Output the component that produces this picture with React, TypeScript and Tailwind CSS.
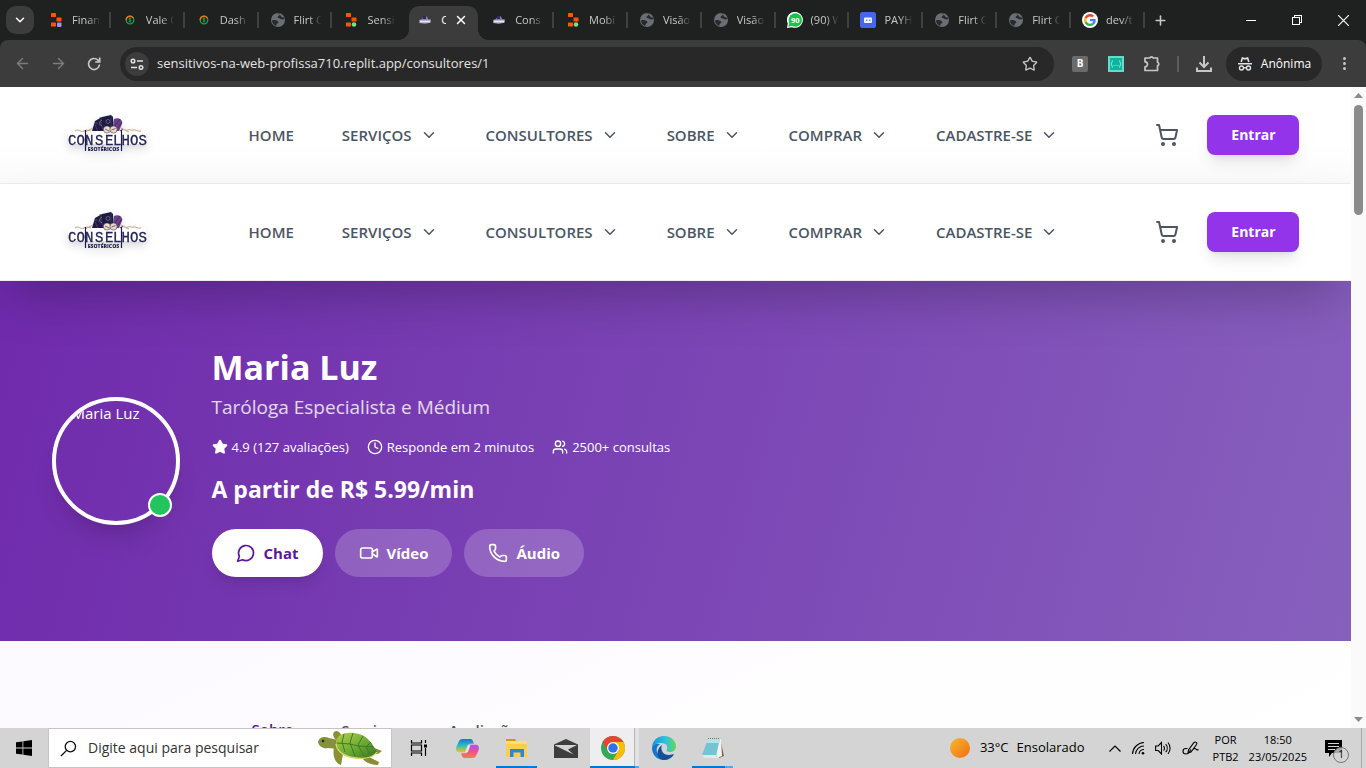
import React from "react";
import { ChevronDown, ShoppingCart, Star, Clock, Users, Video, Phone, ArrowLeft, ArrowRight, Plus, X } from "lucide-react";

type Fav = "finance" | "replit" | "coin" | "globe" | "brand" | "whats" | "pay" | "google";

function GoogleG() {
  return (
    <svg viewBox="0 0 48 48" className="size-4 shrink-0" aria-hidden="true">
      <circle cx="24" cy="24" r="24" fill="#fff" />
      <g transform="translate(6 6) scale(.75)">
        <path fill="#EA4335" d="M24 9.500c3.500 0 6.700 1.200 9.200 3.600l6.900-6.900C35.900 2.400 30.500 0 24 0 14.600 0 6.500 5.400 2.600 13.200l8 6.200C12.400 13.700 17.700 9.500 24 9.500z" />
        <path fill="#4285F4" d="M47 24.600c0-1.600-.2-3.100-.4-4.600H24v9h12.900c-.6 3-2.200 5.500-4.700 7.200l7.700 6C44.400 38 47 31.800 47 24.600z" />
        <path fill="#FBBC05" d="M10.500 28.600c-.5-1.500-.8-3-.8-4.600s.3-3.100.8-4.600l-8-6.200C.9 16.500 0 20.100 0 24s.9 7.500 2.600 10.800l7.900-6.200z" />
        <path fill="#34A853" d="M24 48c6.500 0 11.900-2.100 15.900-5.800l-7.700-6c-2.200 1.500-4.900 2.300-8.200 2.300-6.300 0-11.600-4.200-13.500-9.900l-8 6.200C6.500 42.600 14.600 48 24 48z" />
      </g>
    </svg>
  );
}

function Favicon({ kind }: { kind: Fav }) {
  if (kind === "google") return <GoogleG />;
  return (
    <svg viewBox="0 0 16 16" className="size-4 shrink-0" aria-hidden="true">
      {(kind === "finance" || kind === "replit") && (
        <>
          <rect x="3" y="1" width="5" height="4" rx=".6" fill="#fd5402" />
          <rect x="8.500" y="5.500" width="5" height="4" rx=".6" fill="#fd5402" />
          <rect x="3" y="10.500" width="5" height="4" rx=".6" fill="#fd5402" />
          {kind === "finance" ? <rect x="9" y="10.500" width="4.500" height="4.500" rx="1" fill="#a78bfa" /> : <circle cx="11" cy="12.500" r="2.300" fill="#6ee787" />}
        </>
      )}
      {kind === "coin" && (
        <>
          <circle cx="8" cy="8" r="3.800" fill="none" stroke="#16a34a" strokeWidth="1.300" />
          <path d="M4.200 8a3.800 3.800 0 0 1 7.200-1.700" fill="none" stroke="#f97316" strokeWidth="1.300" />
          <path d="M9.300 6.600c-2.500-1-3.300.9-1.300 1.400s1.300 2.300-1.300 1.400M8 5.500v5" fill="none" stroke="#22a34a" strokeWidth=".9" />
        </>
      )}
      {kind === "globe" && (
        <>
          <circle cx="8" cy="8" r="7" fill="#6b6f75" />
          <path d="M2 8.500c2-.8 4-.5 5.500.5s1 2.500-.5 2.500L6 14c-2.500-1-4-3-4-5.500zM6.500 2l3.500-.4c-.3 1.500-.8 2.400-2 2.700l-.5 1.500 2.500.7c1 1 2.300 1.200 4.300.6V5.500l-2.500-.3L10.500 3.500 9.500 2z" fill="#282a2c" />
        </>
      )}
      {kind === "brand" && (
        <>
          <path d="M2 8l3-1 2-3 3 .5L11 7l3 .5v3L8 12l-6-1z" fill="#8884a8" />
          <path d="M3 8.500h10v2H3z" fill="#e5e7f2" />
          <path d="M6 4h3v3H6z" fill="#2c2a64" />
        </>
      )}
      {kind === "whats" && (
        <>
          <path d="M0 16l.8-4.500A8 8 0 1 1 5 15.300z" fill="#fff" />
          <circle cx="8.300" cy="8" r="6.700" fill="#16c44b" />
          <path d="M1.300 14.800l1-4 3 3z" fill="#16c44b" />
          <text x="8.300" y="10.600" fontSize="7.500" fontWeight="700" textAnchor="middle" fill="#fff" fontFamily="Open Sans, sans-serif">90</text>
        </>
      )}
      {kind === "pay" && (
        <>
          <rect width="16" height="16" rx="2.500" fill="#4666ee" />
          <rect x="4" y="5.500" width="8" height="5.500" rx="1" fill="#f3f5ff" />
          <path d="M6 7.500h1.500v1.500H6zM9 7.500h1.500v1.500H9z" fill="#6d84ef" />
        </>
      )}
    </svg>
  );
}

const browserTabs: { label: string; icon: Fav; active?: boolean; plain?: boolean }[] = [
  { label: "Finan", icon: "finance" },
  { label: "Vale C", icon: "coin" },
  { label: "Dash", icon: "coin" },
  { label: "Flirt C", icon: "globe" },
  { label: "Sensi", icon: "replit", plain: true },
  { label: "C", icon: "brand", active: true, plain: true },
  { label: "Cons", icon: "brand" },
  { label: "Mobi", icon: "replit" },
  { label: "Visão", icon: "globe" },
  { label: "Visão", icon: "globe" },
  { label: "(90) W", icon: "whats" },
  { label: "PAYH", icon: "pay" },
  { label: "Flirt C", icon: "globe" },
  { label: "Flirt C", icon: "globe" },
  { label: "dev/t", icon: "google" },
];

function TabStrip() {
  return (
    <div className="flex h-10 shrink-0 items-stretch bg-[#1f2120] text-[#c7c7c7]">
      <div className="flex w-[37px] shrink-0 items-center pl-1.5">
        <button aria-label="Pesquisar guias" className="flex size-7 items-center justify-center rounded-[10px] bg-[#3c3c3c] text-white">
          <ChevronDown size={14} strokeWidth={2.5} />
        </button>
      </div>
      <div className="flex min-w-0 max-w-[1108px] flex-1 items-stretch">
        {browserTabs.map((t, i) => (
          <div key={i} className="flex min-w-0 flex-1 items-stretch">
            {t.active ? (
              <div className="relative mt-1.5 ml-[3px] flex w-[69px] items-center rounded-t-[10px] bg-[#3c3c3c] pb-1.5 pl-2 before:absolute before:bottom-0 before:-left-2.5 before:size-2.5 before:bg-[radial-gradient(circle_at_0_0,transparent_9.5px,#3c3c3c_10px)] after:absolute after:-right-2.5 after:bottom-0 after:size-2.5 after:bg-[radial-gradient(circle_at_100%_0,transparent_9.5px,#3c3c3c_10px)]">
                <Favicon kind={t.icon} />
                <span className="ml-2 w-[5px] overflow-hidden text-[11px] whitespace-nowrap text-white">{t.label}</span>
                <button aria-label="Fechar guia" className="ml-2 text-white">
                  <X size={14} strokeWidth={2.5} />
                </button>
              </div>
            ) : (
              <>
                <div className="flex min-w-0 flex-1 items-center pl-[11px]">
                  <Favicon kind={t.icon} />
                  <span className="mr-1.5 ml-2 min-w-0 flex-1 overflow-hidden [mask-image:linear-gradient(to_right,#000_50%,transparent_92%)] text-[11px] whitespace-nowrap">{t.label}</span>
                </div>
                <span className={t.plain ? "w-0.5" : "h-4 w-0.5 self-center bg-[#3f4140]"} />
              </>
            )}
          </div>
        ))}
      </div>
      <button aria-label="Nova guia" className="flex w-[30px] shrink-0 items-center justify-center">
        <Plus size={15} strokeWidth={2.5} />
      </button>
      <div className="ml-auto flex items-stretch text-white">
        <button aria-label="Minimizar" className="flex w-[46px] items-center justify-center">
          <span className="h-px w-2.5 bg-white" />
        </button>
        <button aria-label="Restaurar" className="flex w-[46px] items-center justify-center">
          <svg viewBox="0 0 10 10" className="size-2.5" fill="none" stroke="currentColor" shapeRendering="crispEdges" aria-hidden="true">
            <path d="M.5 2.500h7v7h-7zM2.500 2.500v-2h7v7h-2" />
          </svg>
        </button>
        <button aria-label="Fechar" className="flex w-[46px] items-center justify-center">
          <svg viewBox="0 0 10 10" className="size-[11px]" stroke="currentColor" aria-hidden="true">
            <path d="M0 0l10 10M10 0L0 10" />
          </svg>
        </button>
      </div>
    </div>
  );
}

function Toolbar() {
  return (
    <div className="shrink-0 bg-[#1f2120]">
      <div className="flex h-[47px] items-center rounded-t-lg bg-[#3c3c3c] text-[#c7c7c7]">
        <div className="flex w-[120px] shrink-0 items-center pl-1">
          <button aria-label="Voltar" className="flex w-9 justify-center text-[#7c7c7c]"><ArrowLeft size={17} /></button>
          <button aria-label="Avançar" className="flex w-9 justify-center text-[#7c7c7c]"><ArrowRight size={17} /></button>
          <button aria-label="Recarregar" className="flex w-9 justify-center">
            <svg viewBox="0 0 16 16" className="size-4" fill="none" stroke="currentColor" strokeWidth="1.700" aria-hidden="true">
              <path d="M13.500 8.500A5.500 5.500 0 1 1 12 4.200l1.500 1.500M13.700 1.500v4.500H9.200" />
            </svg>
          </button>
        </div>
        <div className="flex h-[34px] min-w-0 flex-1 items-center rounded-full bg-[#282828] pr-4 pl-[5px]">
          <span className="flex size-6 items-center justify-center rounded-full bg-[#3c3c3c]">
            <svg viewBox="0 0 14 12" className="h-3 w-3.5" fill="none" stroke="#e3e3e3" strokeWidth="1.500" aria-hidden="true">
              <circle cx="3" cy="3" r="1.800" /><path d="M7 3h6M1 9.500h6" /><circle cx="11" cy="9.500" r="1.800" />
            </svg>
          </span>
          <input aria-label="Endereço" readOnly value="sensitivos-na-web-profissa710.replit.app/consultores/1" className="ml-2 min-w-0 flex-1 bg-transparent text-[13px] text-[#e3e3e3] outline-none" />
          <button aria-label="Favoritar"><Star size={16} strokeWidth={2} /></button>
        </div>
        <div className="flex shrink-0 items-center">
          <span className="ml-[18px] flex size-4 items-center justify-center rounded-xs bg-[#6b6b6b] text-[10px] font-bold text-white">B</span>
          <svg viewBox="0 0 16 16" className="ml-5 size-4" aria-hidden="true">
            <path d="M0 0h16v16H0z" fill="#62dccb" />
            <path d="M2 2h12v12H2z" fill="#10b3a0" />
            <path d="M5 4.500c-1.500 0-.5 2.500-2 3.500 1.500 1 .5 3.500 2 3.500M11 4.500c1.500 0 .5 2.500 2 3.500-1.500 1-.5 3.500-2 3.500M5.500 9.500h1M7.500 9.500h1M9.500 9.500h1" fill="none" stroke="#8ff0e4" strokeWidth=".9" />
          </svg>
          <button aria-label="Extensões" className="ml-5">
            <svg viewBox="0 0 17 17" className="size-[17px]" fill="none" stroke="currentColor" strokeWidth="1.700" strokeLinejoin="round" aria-hidden="true">
              <path d="M1 3h4.700a2 1.900 0 0 1 3.600 0H13.500v4.200a1.900 1.900 0 0 1 0 3.600V15.500H1v-3.700a2.500 2.500 0 0 0 0-5z" />
            </svg>
          </button>
          <span className="ml-4 h-4 w-0.5 bg-[#5c5c5c]" />
          <button aria-label="Downloads" className="ml-4">
            <svg viewBox="0 0 18 18" className="size-[18px]" fill="none" stroke="currentColor" strokeWidth="2" aria-hidden="true">
              <path d="M9 1v11M4.500 7.500L9 12l4.500-4.500M2 12.500V16h14v-3.500" />
            </svg>
          </button>
          <button className="ml-[13px] flex h-[34px] w-24 items-center justify-center gap-2 rounded-full bg-[#282828] text-xs text-white">
            <svg viewBox="0 0 16 16" className="size-4" aria-hidden="true">
              <path d="M4.200 6l1.200-4 2.600.8 2.600-.8L11.800 6M1 7.700h14" fill="none" stroke="#e3e3e3" strokeWidth="1.600" />
              <circle cx="4.500" cy="12" r="2" fill="none" stroke="#e3e3e3" strokeWidth="1.400" />
              <circle cx="11.500" cy="12" r="2" fill="none" stroke="#e3e3e3" strokeWidth="1.400" />
              <path d="M6.500 11.800h3" stroke="#e3e3e3" strokeWidth="1.400" />
            </svg>
            Anônima
          </button>
          <button aria-label="Menu" className="flex w-11 flex-col items-center gap-0.5">
            <span className="size-[3px] rounded-full bg-[#c7c7c7]" />
            <span className="size-[3px] rounded-full bg-[#c7c7c7]" />
            <span className="size-[3px] rounded-full bg-[#c7c7c7]" />
          </button>
        </div>
      </div>
    </div>
  );
}

function BrandLogo() {
  return (
    <svg viewBox="1 2 80 40" className="h-10 w-20 drop-shadow-lg" role="img" aria-label="Conselhos Esotéricos">
      <path d="M1 18h78v13H1z" fill="#fff" />
      <path d="M25 18l3-10 7-4 9-2 2 2 1 14z" fill="#1a1b4b" />
      <path d="M33 4l3 13M28 9l6 4M44 3v12" stroke="#3b3561" strokeWidth=".8" />
      <path d="M35 7c-3 1-3 5 0 6" fill="none" stroke="#9a6a4c" />
      <circle cx="41" cy="8.500" r="2" fill="none" stroke="#7c6353" strokeWidth=".9" />
      <path d="M47 6c4-2 9 0 8 5l-3 7h-6z" fill="#6d3f88" />
      <path d="M48 13l5-7M51 15l4-6" stroke="#3a2760" strokeWidth=".8" />
      <path d="M31 18c-3-5-3-7-1-9M56 16l-3 2" stroke="#682f60" fill="none" />
      <circle cx="40" cy="16.500" r="3.600" fill="#f0dfcf" stroke="#4a3a4d" strokeWidth=".6" />
      <circle cx="46.500" cy="16.500" r="3.600" fill="#ead6c6" stroke="#4a3a4d" strokeWidth=".6" />
      <path d="M38 16l4 2M44.500 17l4-1.500" stroke="#38315a" strokeWidth=".7" />
      <path d="M8 18c4-3 5 2 9 0s5 0 7 0M18 19l8-4M59 18c4-3 5 0 7-1s5 2 8 1M54 15l8 4" fill="none" stroke="#bfa27f" strokeWidth="1" />
      <path d="M18.500 17v21M54.500 17v21" stroke="#1a1b4b" strokeWidth="1.200" />
      <text y="32" x="1 9.500 18 28 38 46 54.500 63 71.500" fontFamily="Liberation Mono, monospace" fontSize="14" fill="#23235a" stroke="#23235a" strokeWidth=".3">CONSELHOS</text>
      <text x="36.500" y="37.500" textAnchor="middle" fontFamily="Open Sans, sans-serif" fontSize="5.200" fontWeight="800" fill="#1a1b4b">ESOTÉRICOS</text>
    </svg>
  );
}

const navItems = [
  { label: "HOME", menu: false },
  { label: "SERVIÇOS", menu: true },
  { label: "CONSULTORES", menu: true },
  { label: "SOBRE", menu: true },
  { label: "COMPRAR", menu: true },
  { label: "CADASTRE-SE", menu: true },
];

function SiteHeader({ shaded }: { shaded?: boolean }) {
  return (
    <header className={shaded ? "relative border-b border-[#ededee] bg-linear-to-b from-white from-60% to-[#fafafa]" : "relative z-10 border-b border-[#ededee] bg-white shadow-2xl"}>
      <div className="mx-auto flex h-24 max-w-[1280px] items-center justify-between px-4">
        <a href="#inicio" className="flex w-28 pl-4"><BrandLogo /></a>
        <nav className="flex items-center gap-12 text-[15px] font-semibold text-[#4b5563]">
          {navItems.map((n) =>
            n.menu ? (
              <button key={n.label} className="flex items-center gap-2">
                {n.label}
                <ChevronDown size={18} strokeWidth={2} />
              </button>
            ) : (
              <a key={n.label} href="#home">{n.label}</a>
            ),
          )}
        </nav>
        <div className="flex items-center gap-4">
          <button aria-label="Carrinho" className="px-3 text-[#4b5563]"><ShoppingCart size={24} /></button>
          <button className="h-10 w-[92px] rounded-lg bg-[#9333ea] text-sm font-bold text-white shadow-lg">Entrar</button>
        </div>
      </div>
    </header>
  );
}

function Hero() {
  return (
    <section className="bg-[linear-gradient(105deg,#6f2aac,#8760bd)] py-16 text-white">
      <div className="mx-auto flex max-w-[1280px] items-center gap-8 px-4">
        <div className="relative shrink-0">
          <div className="size-32 overflow-hidden rounded-full border-4 border-white pl-4 text-[15px] leading-6 shadow-xl">Maria Luz</div>
          <span className="absolute right-2 bottom-2 size-6 rounded-full border-2 border-white bg-[#22c55e]" />
        </div>
        <div>
          <h1 className="mb-1 text-[34px] leading-11 font-bold">Maria Luz</h1>
          <p className="mb-4 text-[19px] leading-7 text-white/80">Taróloga Especialista e Médium</p>
          <ul className="mb-4 flex gap-[18px] text-[13px] leading-5">
            <li className="flex items-center gap-1"><Star size={16} fill="currentColor" />4.9 (127 avaliações)</li>
            <li className="flex items-center gap-1"><Clock size={16} />Responde em 2 minutos</li>
            <li className="flex items-center gap-1"><Users size={16} />2500+ consultas</li>
          </ul>
          <p className="mb-6 text-[23px] leading-8 font-bold">A partir de R$ 5.99/min</p>
          <div className="flex gap-3 text-[15px] font-bold">
            <button className="flex h-12 items-center gap-2 rounded-full bg-white px-6 text-[#5b16a0] shadow-lg">
              <svg viewBox="0 0 24 24" className="size-5" fill="none" stroke="currentColor" strokeWidth="2" strokeLinecap="round" strokeLinejoin="round" aria-hidden="true">
                <path d="M7.900 20A9 9 0 1 0 4 16.100L2 22Z" />
              </svg>
              Chat
            </button>
            <button className="flex h-12 items-center gap-2 rounded-full bg-white/20 px-6"><Video size={20} />Vídeo</button>
            <button className="flex h-12 items-center gap-2 rounded-full bg-white/20 px-6"><Phone size={20} />Áudio</button>
          </div>
        </div>
      </div>
    </section>
  );
}

function Details() {
  return (
    <section className="pt-16">
      <div className="mx-auto flex max-w-[896px] text-[15px] leading-6 font-semibold text-[#4b5563]">
        <button className="border-b-2 border-[#5b16a0] px-6 py-3 text-[#5b16a0]">Sobre</button>
        <button className="px-6 py-3">Serviços</button>
        <button className="px-6 py-3">Avaliações</button>
      </div>
    </section>
  );
}

function ScrollRail() {
  return (
    <div className="flex w-[15px] shrink-0 flex-col items-center justify-between bg-[#fafafa] py-1.5" aria-hidden="true">
      <div className="flex flex-col items-center gap-[7px]">
        <svg viewBox="0 0 9 5" className="h-[5px] w-[9px]"><path d="M0 5l4.500-5L9 5z" fill="#8b8b8b" /></svg>
        <span className="h-[110px] w-[9px] rounded-full bg-[#8b8b8b]" />
      </div>
      <svg viewBox="0 0 9 5" className="h-[5px] w-[9px]"><path d="M0 0l4.500 5L9 0z" fill="#8b8b8b" /></svg>
    </div>
  );
}

function Turtle() {
  return (
    <svg viewBox="0 0 66 36" className="h-9 w-[66px] shrink-0" aria-hidden="true">
      <defs>
        <linearGradient id="shell" x1="0" y1="0" x2="1" y2="1">
          <stop offset="0" stopColor="#b5cf4a" /><stop offset=".5" stopColor="#6fae35" /><stop offset="1" stopColor="#36701f" />
        </linearGradient>
      </defs>
      <path d="M17 2c4-3 7 2 8 5l-6 3c-2-2-4-5-2-8zM18 17c4 0 8 3 8 7l-2 11c-5-1-9-8-7-18z" fill="#8a8f33" />
      <path d="M50 26l12 6-1 3c-6 0-12-2-15-6zM55 17l10 4-4 3-8-1z" fill="#8c8b36" />
      <path d="M1 12c1-5 6-6 11-4l9 2v9l-10-1c-4 1-9-1-10-6z" fill="#85903a" />
      <circle cx="6" cy="11" r="1.300" fill="#1e2610" />
      <path d="M19 12C20 3 31 1 42 4c10 3 14 11 18 18-5 8-20 8-30 4-7-3-12-7-11-14z" fill="url(#shell)" />
      <path d="M19 14c1 8 9 13 20 14 9 1 17 0 21-6" fill="none" stroke="#d6d96b" strokeWidth="1.300" />
      <path d="M27 4l-2 8 3 10M36 3l-3 10 5 13M46 6l-5 9 6 11M54 12l-5 5 4 7M20 13l13 1 8 2 15 1" fill="none" stroke="#3f7a25" strokeWidth="1" />
    </svg>
  );
}

function Slot({ label, bar, active, stacked, children }: { label: string; bar?: boolean; active?: boolean; stacked?: boolean; children: React.ReactNode }) {
  return (
    <button aria-label={label} className={active ? "relative flex w-[49px] items-center justify-center border-r-4 border-[#e2e2e2] bg-[#eeeeee]" : "relative flex w-[49px] items-center justify-center"}>
      {children}
      {active && <span className="absolute inset-y-0 right-0 w-px bg-[#b5b5b5]" />}
      {bar && (
        <span className={active ? "absolute inset-x-0 -right-1 bottom-0 flex h-0.5 bg-[#0078d7]" : "absolute inset-x-1 bottom-0 flex h-0.5 bg-[#0078d7]"}>
          {stacked && <span className={active ? "ml-auto w-1 bg-[#5ea5e0]" : "ml-auto w-2 bg-[#5ea5e0]"} />}
        </span>
      )}
    </button>
  );
}

function Taskbar() {
  return (
    <footer className="flex h-10 shrink-0 items-stretch bg-[#d4d4d4] text-black">
      <button aria-label="Iniciar" className="flex w-12 items-center justify-center">
        <svg viewBox="0 0 16 16" className="size-4" aria-hidden="true">
          <path d="M0 2.300L6.500 1.400v6.200H0zM7.300 1.300L16 0v7.600H7.300zM0 8.400h6.500v6.200L0 13.700zM7.300 8.400H16V16l-8.700-1.300z" />
        </svg>
      </button>
      <label className="mr-0.5 flex w-[344px] items-center border border-[#c4c4c4] bg-white pr-2 pl-[11px]">
        <svg viewBox="0 0 18 18" className="size-[17px] shrink-0" fill="none" stroke="#111" strokeWidth="1.400" aria-hidden="true">
          <circle cx="11" cy="7" r="5.500" /><path d="M7 11l-6 6" />
        </svg>
        <input aria-label="Pesquisar" placeholder="Digite aqui para pesquisar" className="ml-[11px] min-w-0 flex-1 bg-transparent text-sm outline-none placeholder:text-[#333]" />
        <Turtle />
      </label>
      <Slot label="Visão de tarefas">
        <svg viewBox="0 0 18 16" className="h-4 w-[18px]" fill="none" stroke="#000" strokeWidth="1.200" aria-hidden="true">
          <path d="M1.500 0v3h10V0M1.500 16v-3h10v3M1.500 5h10v6h-10zM15.500 0v3M15.500 8v8" /><path d="M14 4.500h3v3h-3z" fill="#000" stroke="none" />
        </svg>
      </Slot>
      <Slot label="Copilot">
        <svg viewBox="0 0 24 22" className="h-[21px] w-[23px]" aria-hidden="true">
          <defs>
            <linearGradient id="cpa" x1="0" y1="0" x2="0" y2="1"><stop offset="0" stopColor="#1c6fe0" /><stop offset=".5" stopColor="#2dbfb9" /><stop offset="1" stopColor="#f3c51d" /></linearGradient>
            <linearGradient id="cpb" x1="0" y1="0" x2="0" y2="1"><stop offset="0" stopColor="#a855f7" /><stop offset=".5" stopColor="#ee4f93" /><stop offset="1" stopColor="#f9813a" /></linearGradient>
          </defs>
          <path d="M7 1h8c2 0 2.500 1.500 3 3l.6 2H15c-2 0-2.600 1-3 2.500L10 15H3c-3 0-3.500-3-2.500-6L3 3.500C3.800 1.700 5 1 7 1z" fill="url(#cpa)" />
          <path d="M17 21H9c-2 0-2.500-1.500-3-3l-.6-2H9c2 0 2.600-1 3-2.500L14 7h7c3 0 3.500 3 2.500 6L21 18.500c-.8 1.800-2 2.500-4 2.500z" fill="url(#cpb)" />
          <path d="M12.500 7.500h2.500l-2.700 7.500H9.500z" fill="#e9e4ee" />
        </svg>
      </Slot>
      <Slot label="Explorador de Arquivos" bar>
        <svg viewBox="0 0 22 18" className="h-[18px] w-[22px]" aria-hidden="true">
          <path d="M0 0h9l1.500 2.500H0z" fill="#d9970f" /><path d="M0 2h21v16H0z" fill="#ffcf4b" /><path d="M0 2h21v3H0z" fill="#ffdc7a" /><path d="M4 18V10h14v8h-3.500v-4.500h-7V18z" fill="#2f87d3" />
        </svg>
      </Slot>
      <Slot label="Email">
        <svg viewBox="0 0 24 19" className="h-[19px] w-6" aria-hidden="true">
          <path d="M0 5.500L12 0l12 5.500V19H0z" fill="#3d3d3d" /><path d="M1 6h22l-9 4.500 5.500 5L1 6.500z" fill="#d4d4d4" />
        </svg>
      </Slot>
      <Slot label="Chrome" bar active stacked>
        <svg viewBox="0 0 48 48" className="size-6" aria-hidden="true">
          <circle cx="24" cy="24" r="24" fill="#34a853" />
          <path d="M3.200 12A24 24 0 0 1 44.800 12H24L13.600 30z" fill="#ea4335" />
          <path d="M44.800 12A24 24 0 0 1 24 48l10.400-18L24 12z" fill="#fbbc05" />
          <circle cx="24" cy="24" r="12" fill="#fff" /><circle cx="24" cy="24" r="9.500" fill="#2f72e8" />
        </svg>
      </Slot>
      <Slot label="Edge">
        <svg viewBox="0 0 24 24" className="size-6" aria-hidden="true">
          <defs>
            <linearGradient id="edgea" x1="0" y1="0" x2="1" y2="0"><stop offset="0" stopColor="#1b8fd8" /><stop offset=".55" stopColor="#2bc2df" /><stop offset="1" stopColor="#62d956" /></linearGradient>
          </defs>
          <path d="M0 12C0 5 5 0 12 0s12 5 12 10c0 4-3 6-6 6s-4-1-3-3 0-6-6-6c-4 0-8 2-9 5z" fill="url(#edgea)" />
          <path d="M0 12c1-3 4-5 8-4-3 2-4 5-3 8 2 5 6 6 10 7-8 3-15-3-15-11z" fill="#1476ce" />
          <path d="M10 9c-2 5 1 10 7 10 2 0 4-1 5-1-2 4-6 6-10 6-7 0-9-10-2-15z" fill="#10509c" />
        </svg>
      </Slot>
      <Slot label="Bloco de Notas" bar stacked>
        <svg viewBox="0 0 24 22" className="h-[22px] w-6" aria-hidden="true">
          <path d="M19 1l4 18-5 2z" fill="#7a6a4c" /><path d="M17 2h3l1 17-5 2z" fill="#f4f4ee" /><path d="M7 2h12l-4 16H1z" fill="#74c4d4" /><path d="M7 2h12l-1.200 4H5z" fill="#b7e3e8" /><path d="M1 18h14l1 3H3z" fill="#dfe9e9" /><path d="M7 1.500h12" stroke="#66777b" strokeWidth="1.200" strokeDasharray="1 1" />
        </svg>
      </Slot>
      <div className="ml-auto flex items-center">
        <span className="size-5 rounded-full bg-linear-to-br from-[#f5b82e] to-[#f26a10]" />
        <span className="ml-2.5 text-[13px]">33°C</span>
        <span className="ml-2 text-[13px]">Ensolarado</span>
        <div className="ml-6 flex items-center gap-2.5">
          <svg viewBox="0 0 12 7" className="h-[7px] w-3" fill="none" stroke="#000" strokeWidth="1.200" aria-hidden="true"><path d="M.5 6.500L6 1l5.500 5.500" /></svg>
          <svg viewBox="0 0 14 14" className="size-3.5" fill="none" stroke="#000" strokeWidth="1.100" aria-hidden="true"><path d="M4.500 13A8.500 8.500 0 0 1 13 5M8 13a5 5 0 0 1 5-4.500M1.500 13A12 12 0 0 1 13 1.500" /><circle cx="12" cy="12.300" r="1.300" fill="#000" stroke="none" /></svg>
          <svg viewBox="0 0 17 14" className="h-3.5 w-[17px]" fill="none" stroke="#000" strokeWidth="1.100" aria-hidden="true"><path d="M.6 5v4.500h2.600L6.500 13V1.500L3.200 5zM8.500 5a3 3 0 0 1 0 4.500M10.700 3.200a6 6 0 0 1 0 8M13 1.500a9 9 0 0 1 0 11.500" /></svg>
          <svg viewBox="0 0 17 15" className="h-[15px] w-[17px]" fill="none" stroke="#000" strokeWidth="1.100" aria-hidden="true"><path d="M5.500 7.500H4C0 7.500 0 13 4 13c3.500 0 3.500-3 5-4.500M6 12l.5-3L12 1.500c1.500-1.300 3.500.3 2.500 2L9 11zM11.500 8c3-2 2.500 2.500 5 .5" /></svg>
        </div>
        <div className="ml-3.5 flex flex-col items-center text-[11px] leading-[17px]"><span>POR</span><span>PTB2</span></div>
        <div className="ml-2.5 flex flex-col items-center text-[11px] leading-[17px]"><span>18:50</span><span>23/05/2025</span></div>
        <button aria-label="Notificações" className="relative ml-[18px] flex w-[26px]">
          <svg viewBox="0 0 17 17" className="size-[17px]" aria-hidden="true"><path d="M0 0h17v13H7l-3 4v-4H0z" /><path d="M3 3.500h11M3 6.500h11M3 9.500h7" stroke="#d4d4d4" strokeWidth="1.200" /></svg>
          <span className="absolute -bottom-1.5 left-2 flex size-4 items-center justify-center rounded-full border border-[#777] bg-[#d4d4d4]/80 text-[10px]">1</span>
        </button>
        <span className="mr-1 ml-2.5 h-10 w-px bg-[#a8a8a8]" />
      </div>
    </footer>
  );
}

export default function App() {
  return (
    <div className="flex h-screen flex-col overflow-hidden font-['Open_Sans','Noto_Sans',sans-serif]">
      <TabStrip />
      <Toolbar />
      <div className="flex min-h-0 flex-1">
        <main className="min-w-0 flex-1 overflow-hidden bg-linear-to-br from-[#faf5ff] to-white">
          <SiteHeader shaded />
          <SiteHeader />
          <Hero />
          <Details />
        </main>
        <ScrollRail />
      </div>
      <Taskbar />
    </div>
  );
}
